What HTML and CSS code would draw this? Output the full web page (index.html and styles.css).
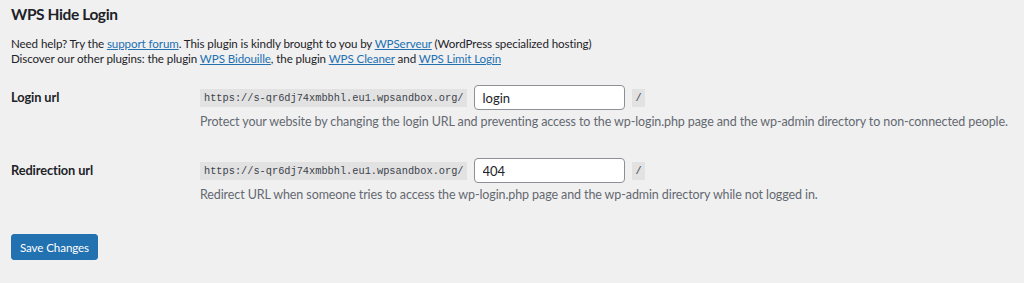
FILE: index.html
```html
<!DOCTYPE html>
<html lang="en">
<head>
  <meta charset="UTF-8" />
  <title>WPS Hide Login</title>
  <link rel="stylesheet" href="styles.css">
</head>
<body>
  <div class="wrap">
    <h2>WPS Hide Login</h2>

    <p class="intro">
      Need help? Try the <a href="#">support forum</a>. This plugin is kindly brought to you by <a href="#">WPServeur</a> (WordPress specialized hosting)<br>
      Discover our other plugins: the plugin <a href="#">WPS Bidouille</a>, the plugin <a href="#">WPS Cleaner</a> and <a href="#">WPS Limit Login</a>
    </p>

    <form class="form-table">
      <div class="row">
        <label class="label" for="whl_page">Login url</label>
        <div class="field">
          <div class="url-line">
            <code>https://s-qr6dj74xmbbhl.eu1.wpsandbox.org/</code>
            <input type="text" id="whl_page" value="login">
            <code>/</code>
          </div>
          <p class="description">Protect your website by changing the login URL and preventing access to the wp-login.php page and the wp-admin directory to non-connected people.</p>
        </div>
      </div>

      <div class="row">
        <label class="label" for="whl_redirect">Redirection url</label>
        <div class="field">
          <div class="url-line">
            <code>https://s-qr6dj74xmbbhl.eu1.wpsandbox.org/</code>
            <input type="text" id="whl_redirect" value="404">
            <code>/</code>
          </div>
          <p class="description">Redirect URL when someone tries to access the wp-login.php page and the wp-admin directory while not logged in.</p>
        </div>
      </div>

      <p class="submit">
        <button type="button" class="button-primary">Save Changes</button>
      </p>
    </form>
  </div>
</body>
</html>
```

FILE: styles.css
```css
:root {
  --text-color: #1d2327;
  --link-color: #2271b1;
  --muted-color: #646970;
}

body {
  margin: 0;
  background: #f0f0f1;
  color: var(--text-color);
  font-family: Lato, "Liberation Sans", sans-serif;
  font-size: 11.6px;
  letter-spacing: -0.1px;
}

.wrap {
  padding: 0 11px;
}

h2 {
  margin: 0;
  padding-top: 4px;
  font-size: 15.5px;
  font-weight: 700;
  line-height: 20px;
  letter-spacing: -0.4px;
}

.intro {
  margin: 12px 0 0;
  line-height: 15px;
}

a {
  color: var(--link-color);
}

/* TABLE DU FORMULAIRE */
.form-table {
  margin-top: 19px;
}

.row {
  display: grid;
  grid-template-columns: 189px 1fr;
  margin-bottom: 26px;
}

.label {
  font-size: 12.8px;
  font-weight: 700;
  line-height: 25px;
}

.url-line {
  display: flex;
  align-items: center;
  gap: 7px;
}

code {
  font-family: "Liberation Mono", monospace;
  font-size: 10.3px;
  letter-spacing: 0;
  background: #e2e2e3;
  padding: 3px 3px 3px 4px;
  line-height: 12px;
  color: #3c434a;
}

input {
  width: 151px;
  height: 25px;
  box-sizing: border-box;
  border: 1px solid #8c8f94;
  border-radius: 4px;
  padding: 0 8px;
  font-family: inherit;
  font-size: 13px;
  color: var(--text-color);
  background: #fff;
}

.description {
  margin: 2px 0 0;
  font-size: 12.5px;
  line-height: 20px;
  color: var(--muted-color);
}

.submit {
  margin: 29px 0 0;
}

.button-primary {
  background: var(--link-color);
  border: 1px solid var(--link-color);
  border-radius: 3px;
  color: #fff;
  font-family: inherit;
  font-size: 11.6px;
  letter-spacing: -0.1px;
  height: 26px;
  width: 87px;
  padding: 0;
  cursor: pointer;
}
```
